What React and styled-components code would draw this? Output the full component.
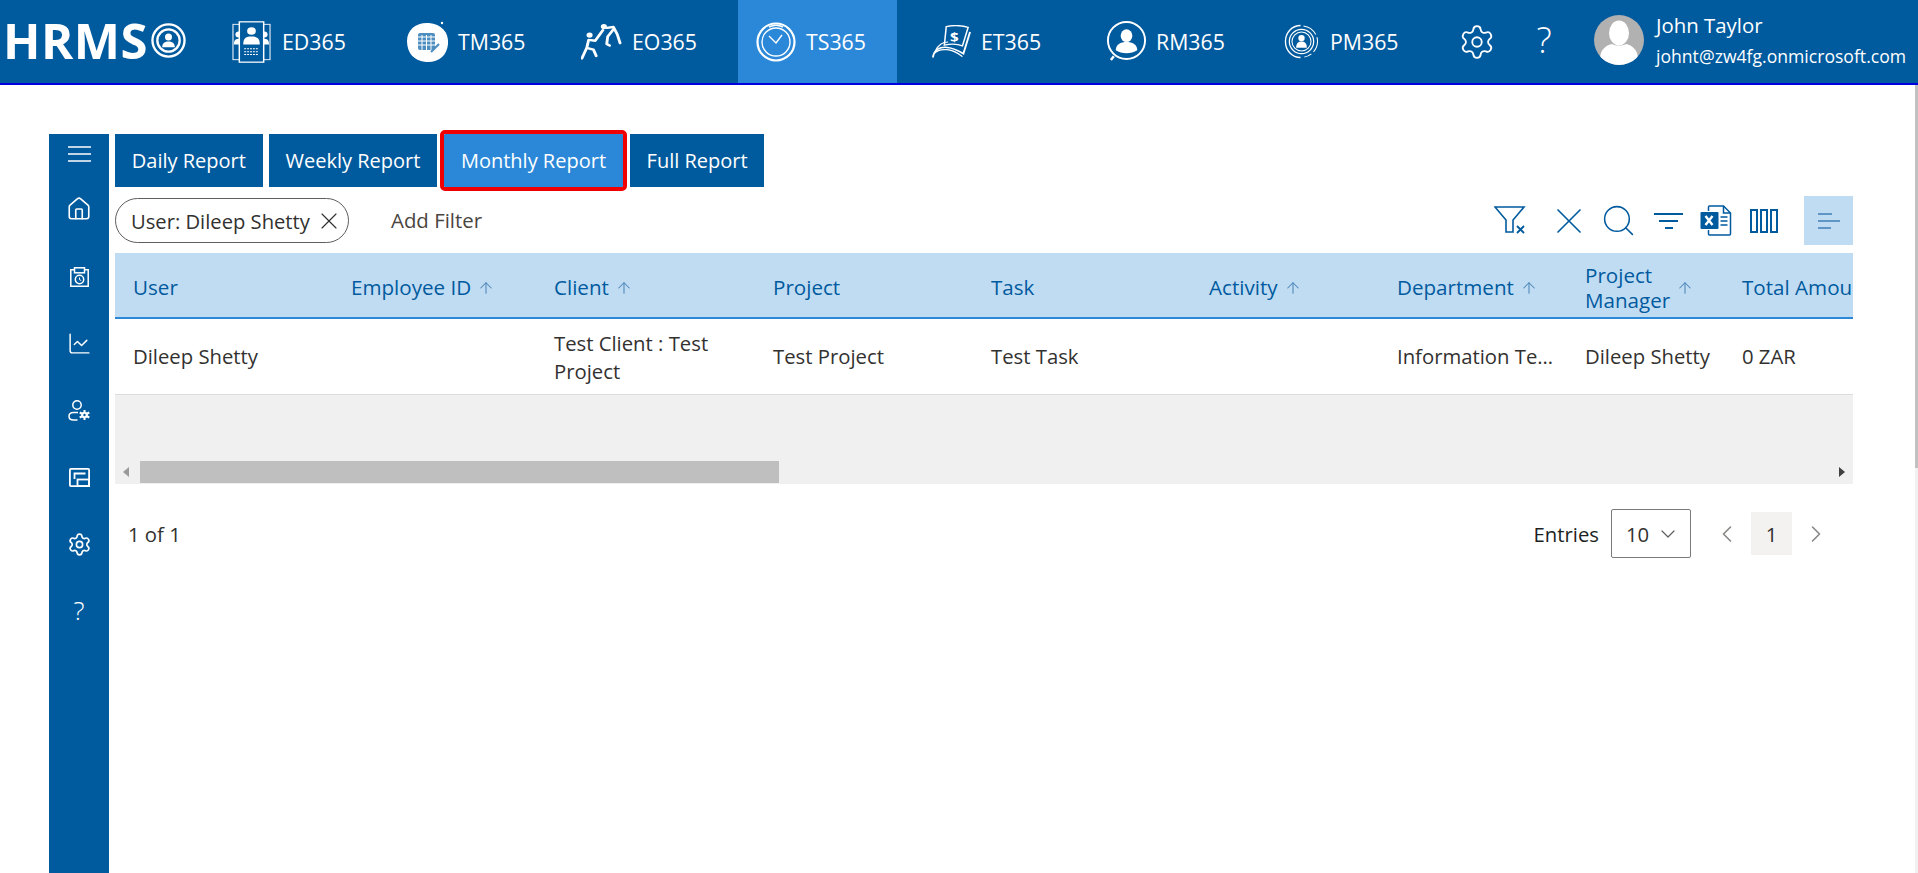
import React from "react";
import styled, { createGlobalStyle } from "styled-components";
import { ArrowUp, ChevronDown, ChevronLeft, ChevronRight, Settings, X, Search, Home, ChartLine } from "lucide-react";

const GlobalStyle = createGlobalStyle`
  html, body { margin: 0; padding: 0; height: 100%; overflow: hidden; background: #fff; }
  body { font-family: "Open Sans", "Noto Sans", "Liberation Sans", sans-serif; color: #323130; }
  * { box-sizing: border-box; }
`;

const Page = styled.div`
  height: 873px;
  display: flex;
  flex-direction: column;
  overflow: hidden;
`;

const Header = styled.header`
  height: 85px;
  flex: none;
  display: flex;
  background: #005a9e;
  border-bottom: 2px solid #0000e0;
  color: #fff;
`;

const Logo = styled.div`
  width: 214px;
  flex: none;
  display: flex;
  align-items: center;
  padding: 0 0 2px 3px;
  gap: 3px;
`;

const LogoText = styled.span`
  font-weight: 700;
  font-size: 49px;
  letter-spacing: 0.5px;
  line-height: 1;
`;

const Nav = styled.nav`
  display: flex;
  gap: 17px;
`;

const NavItem = styled.a`
  width: ${(p) => p.$w}px;
  padding-left: 18px;
  display: flex;
  align-items: center;
  gap: ${(p) => p.$gap}px;
  font-size: 21.3px;
  background: ${(p) => (p.$active ? "#2b88d8" : "transparent")};
`;

const HeaderTools = styled.div`
  display: flex;
  align-items: center;
  margin-left: 21px;
`;

const ToolBtn = styled.span`
  display: flex;
  align-items: center;
  justify-content: center;
  width: ${(p) => p.$w}px;
`;

const Help = styled.span`
  font-size: ${(p) => p.$size}px;
  font-weight: 300;
  line-height: 1;
  padding-bottom: 3px;
  color: #fff;
`;

const Avatar = styled.div`
  width: 50px;
  height: 50px;
  border-radius: 50%;
  overflow: hidden;
  flex: none;
  margin: 0 0 4px 3px;
`;

const UserBox = styled.div`
  margin: 0 0 3px 12px;
  display: flex;
  flex-direction: column;
  gap: 8px;
`;

const UserName = styled.span`
  font-size: 20.4px;
  line-height: 24px;
`;

const UserMail = styled.span`
  font-size: 17.6px;
  line-height: 22px;
  white-space: nowrap;
`;

const Body = styled.div`
  flex: 1;
  display: flex;
  gap: 6px;
  padding: 49px 0 0 49px;
  min-height: 0;
`;

const Sidebar = styled.aside`
  width: 60px;
  flex: none;
  background: #005a9e;
  display: flex;
  flex-direction: column;
  align-items: center;
  color: #fff;
`;

const SideSlot = styled.span`
  height: ${(p) => p.$h || 67}px;
  flex: none;
  display: flex;
  align-items: center;
  justify-content: center;
`;

const Main = styled.main`
  width: 1738px;
  flex: none;
`;

const Tabs = styled.div`
  display: flex;
  gap: 6px;
  height: 53px;
`;

const Tab = styled.button`
  border: none;
  padding: 0 16.8px;
  height: 53px;
  color: #fff;
  font: inherit;
  font-size: 20px;
  background: ${(p) => (p.$active ? "#2b88d8" : "#005a9e")};
  ${(p) => p.$active && "outline: 4px solid #f00000; outline-offset: 0; border-radius: 1px; margin: 0 1px 0 1px;"}
`;

const FilterRow = styled.div`
  margin-top: 9px;
  height: 49px;
  display: flex;
  align-items: center;
`;

const Chip = styled.div`
  height: 45px;
  width: 234px;
  border: 1px solid #605e5c;
  border-radius: 23px;
  display: flex;
  align-items: center;
  justify-content: space-between;
  padding: 0 5px 0 15px;
  font-size: 20.2px;
  white-space: nowrap;
`;

const AddFilter = styled.span`
  margin: 0 0 2px 42px;
  font-size: 20.4px;
  color: #4a4540;
`;

const Toolbar = styled.div`
  margin-left: auto;
  display: flex;
  align-items: center;
  color: #005a9e;
`;

const ToolIcon = styled.span`
  display: flex;
  justify-content: center;
  align-items: center;
  width: ${(p) => p.$w}px;
  svg { flex: none; }
`;

const ToolActive = styled.span`
  width: 49px;
  height: 49px;
  margin-left: 16px;
  background: #c0dcf3;
  display: flex;
  align-items: center;
  justify-content: center;
`;

const TableWrap = styled.div`
  margin-top: 8px;
  height: 231px;
  background: #f0f0f0;
  display: flex;
  flex-direction: column;
`;

const TableScroll = styled.div`
  flex: 1;
  overflow: hidden;
`;

const Table = styled.table`
  table-layout: fixed;
  width: 1809px;
  border-collapse: collapse;
`;

const Th = styled.th`
  height: 65px;
  background: #c0dcf3;
  border-bottom: 2px solid #2b88d8;
  padding: 5px 18px 0;
  text-align: left;
  font-weight: 400;
  font-size: 20.6px;
  line-height: 25px;
  color: #005a9e;
`;

const ThInner = styled.div`
  display: flex;
  align-items: center;
  gap: 6px;
  white-space: nowrap;
`;

const Td = styled.td`
  height: 76px;
  background: #fff;
  border-bottom: 1px solid #dcdcdc;
  padding: ${(p) => (p.$wrap ? "2px" : "0")} 8px 0 18px;
  font-size: 20.3px;
  line-height: 28px;
  color: #323130;
  white-space: ${(p) => (p.$wrap ? "normal" : "nowrap")};
  overflow: hidden;
  text-overflow: ellipsis;
`;

const ScrollTrack = styled.div`
  height: 23px;
  flex: none;
  display: flex;
  align-items: center;
  padding: 0 8px 1px;
`;

const Thumb = styled.div`
  margin-left: 11px;
  width: 639px;
  height: 22px;
  background: #bfbfbf;
`;

const Caret = styled.span`
  width: 0;
  height: 0;
  border-top: 5px solid transparent;
  border-bottom: 5px solid transparent;
  ${(p) => (p.$right ? "border-left: 6px solid #404040; margin-left: auto;" : "border-right: 6px solid #9a9a9a;")}
`;

const Footer = styled.div`
  padding: 25px 0 0 13px;
  display: flex;
  align-items: center;
  font-size: 20.3px;
`;

const Count = styled.span`
  color: #323130;
`;

const Pager = styled.div`
  margin-left: auto;
  padding-right: 13px;
  display: flex;
  align-items: center;
`;

const EntriesLabel = styled.span`
  margin-right: 12px;
  color: #201f1e;
`;

const Select = styled.div`
  width: 80px;
  height: 49px;
  border: 1px solid #7a7a7a;
  border-radius: 2px;
  display: flex;
  align-items: center;
  justify-content: space-between;
  padding: 0 10px 0 14px;
`;

const PageArrow = styled.span`
  width: ${(p) => p.$w}px;
  padding-left: ${(p) => p.$shift || 0}px;
  display: flex;
  justify-content: center;
  color: #8a8886;
`;

const PageNum = styled.span`
  width: 41px;
  height: 43px;
  background: #f3f2f1;
  display: flex;
  align-items: center;
  justify-content: center;
`;

const PageScroll = styled.div`
  position: fixed;
  top: 85px;
  right: 0;
  width: 3px;
  bottom: 0;
  background: #f1f1f1;
`;

const PageScrollThumb = styled.div`
  height: 383px;
  background: #c1c1c1;
`;

/* drawings */
const LogoIcon = () => (
  <svg width="35" height="35" viewBox="0 0 36 36" fill="none">
    <circle cx="18" cy="18" r="16.5" stroke="#fff" strokeWidth="2.4" />
    <circle cx="18" cy="18" r="11.5" stroke="#fff" strokeWidth="2.4" />
    <circle cx="18" cy="14.5" r="3.6" fill="#fff" />
    <path d="M11.5 25c0-4.5 3-6 6.5-6s6.500 1.500 6.500 6z" fill="#fff" />
  </svg>
);

const EdIcon = () => (
  <svg width="39" height="42" viewBox="0 0 40 50" preserveAspectRatio="none" fill="none" stroke="#dfeaf4" strokeWidth="1.2">
    <rect x="1" y="4" width="9" height="42" />
    <rect x="30" y="4" width="9" height="42" />
    <circle cx="7" cy="16" r="3.500" fill="#fff" stroke="none" />
    <circle cx="33" cy="16" r="3.500" fill="#fff" stroke="none" />
    <path d="M2 28c0-6 2-7 6-7v7zM38 28c0-6-2-7-6-7v7z" fill="#fff" stroke="none" />
    <rect x="7.500" y="1" width="25" height="48" fill="#005a9e" stroke="#fff" strokeWidth="1.500" />
    <circle cx="20" cy="12" r="4.500" fill="#fff" stroke="none" />
    <path d="M11.500 28c0-8 3-9.500 8.500-9.500s8.500 1.500 8.500 9.500z" fill="#fff" stroke="none" />
    <path d="M12.500 33h15M12.500 36.500h15M12.500 40h15" stroke="#fff" strokeDasharray="2 1" />
  </svg>
);

const TmIcon = () => (
  <svg width="44" height="42" viewBox="0 0 44 42" fill="none">
    <path d="M2 20C2 8 12 1 24 2c12 1 20 9 19 21-1 12-10 19-22 18C9 40 2 32 2 20z" fill="#fff" />
    <circle cx="37" cy="2" r="1.200" fill="#fff" />
    <rect x="13" y="12" width="17" height="17" rx="2" fill="#4d8dc0" />
    <path d="M13 16h17M13 20h17M13 24h17M17 14v15M21.500 14v15M26 14v15" stroke="#fff" strokeWidth="1" />
    <path d="M26 31l8-8" stroke="#4d8dc0" strokeWidth="2.200" />
  </svg>
);

const EoIcon = () => (
  <svg width="41" height="37" viewBox="0 0 43 46" preserveAspectRatio="none" fill="none" stroke="#fff" strokeWidth="3" strokeLinecap="round" strokeLinejoin="round">
    <circle cx="9" cy="15" r="3.200" fill="#fff" stroke="none" />
    <circle cx="24" cy="4.500" r="3.200" fill="#fff" stroke="none" />
    <path d="M8 21l-2 10-5 13M6 31l7 2 3 8M8 21l7 1 8-13" />
    <path d="M27 6l7-1 4 9 3 11M34 8l-6 9-1 9 3 2" />
  </svg>
);

const TsIcon = () => (
  <svg width="40" height="40" viewBox="0 0 40 40" fill="none" stroke="#fff">
    <circle cx="20" cy="20" r="18.500" strokeWidth="2.200" />
    <circle cx="20" cy="20" r="14" strokeWidth="1.400" />
    <path d="M13 14l7 7 6-8" strokeWidth="1.400" />
    <path d="M13 5a16 16 0 0 1 14 0" strokeWidth="1.400" />
  </svg>
);

const EtIcon = () => (
  <svg width="39" height="34" viewBox="0 0 41 44" preserveAspectRatio="none" fill="none" stroke="#fff" strokeWidth="1.600">
    <path d="M15 2c8-2 15-2 23 1l-6 24c-6-3-12-3-19-1z" />
    <text x="19" y="22" fontSize="16" fontWeight="700" fill="#fff" stroke="none" fontFamily="Open Sans, sans-serif">$</text>
    <path d="M1 42c1-10 7-14 15-13 8 1 13 5 17 8l7-28" strokeWidth="2" />
    <path d="M4 33c3-8 8-11 13-11" />
    <path d="M2 37c3-4 8-6 14-5 6 1 11 4 16 9" />
  </svg>
);

const RmIcon = () => (
  <svg width="41" height="41" viewBox="0 0 42 42" fill="none">
    <circle cx="21" cy="20" r="19" stroke="#fff" strokeWidth="2" />
    <ellipse cx="21" cy="15" rx="6" ry="6.500" fill="#fff" />
    <path d="M10 30c0-6 5-8.500 11-8.500s11 2.500 11 8.500c-3 2-7 3-11 3s-8-1-11-3z" fill="#fff" />
    <path d="M5 40l3-4" stroke="#fff" strokeWidth="2.500" />
  </svg>
);

const PmIcon = () => (
  <svg width="35" height="35" viewBox="0 0 36 36" fill="none" stroke="#fff">
    <path d="M17 1.500C8 1.500 1.500 9 1.500 18S8 34.500 17 34.500" strokeWidth="1.400" />
    <path d="M20 2c8 1 14.500 8 14.500 16S28 33 21 34" strokeWidth="1.100" strokeDasharray="16 3" />
    <circle cx="18" cy="18" r="12.500" strokeWidth="1.300" />
    <circle cx="18" cy="18" r="9.800" strokeWidth="1.100" />
    <circle cx="18" cy="14.500" r="3.300" fill="#fff" stroke="none" />
    <path d="M12.500 24.500c0-5 2.500-6.500 5.500-6.500s5.500 1.500 5.500 6.500z" fill="#fff" stroke="none" />
  </svg>
);

const AvatarIcon = () => (
  <svg width="50" height="50" viewBox="0 0 50 50">
    <rect width="50" height="50" fill="#b1b1b1" />
    <ellipse cx="25" cy="18" rx="10" ry="12.500" fill="#fff" />
    <path d="M6 44c0-10 7-14 12-15 4 2 10 2 14 0 5 1 12 5 12 15-5 5-12 7-19 7S11 49 6 44z" fill="#fff" />
  </svg>
);

const MenuIcon = () => (
  <svg width="23" height="16" viewBox="0 0 23 16" fill="none" stroke="#fff" strokeWidth="1.500">
    <path d="M0 1h23M0 8h23M0 15h23" />
  </svg>
);

const SaveClockIcon = () => (
  <svg width="19" height="20" viewBox="0 0 19 20" fill="none" stroke="#fff" strokeWidth="1.500">
    <path d="M.8 2.800h17.400v16.400H.8z" />
    <rect x="4.500" y=".8" width="10" height="5" fill="#005a9e" />
    <circle cx="9.500" cy="12.500" r="4.200" />
    <path d="M9.500 10.500v2.200l1.700.8" strokeWidth="1" />
  </svg>
);

const UserGearIcon = () => (
  <svg width="22" height="21" viewBox="0 0 22 21" fill="none" stroke="#fff" strokeWidth="1.500">
    <circle cx="9" cy="5" r="4.200" />
    <path d="M9.500 20H5.500c-6 0-6-7.500 0-7.500h4.500" />
    <circle cx="16.500" cy="15" r="3.300" fill="#fff" stroke="none" />
    <path d="M16.500 10v10M11.700 12.500l9.600 5M21.300 12.500l-9.600 5" strokeWidth="2" />
    <circle cx="16.500" cy="15" r="1.200" fill="#005a9e" stroke="none" />
  </svg>
);

const PanelIcon = () => (
  <svg width="21" height="19" viewBox="0 0 21 19" fill="none" stroke="#fff" strokeWidth="1.800">
    <rect x=".9" y=".9" width="19.200" height="17.200" rx="1" />
    <path d="M5.500 11V5.500h11" />
    <rect x="8.500" y="11.500" width="11.600" height="6.600" />
  </svg>
);

const FunnelXIcon = () => (
  <svg width="33" height="29" viewBox="0 0 33 29" fill="none" stroke="#005a9e" strokeWidth="1.600">
    <path d="M1 1h29L19 14v12l-7 0V14z" />
    <path d="M23 20l7 7M30 20l-7 7" strokeWidth="1.800" />
  </svg>
);

const SortLinesIcon = () => (
  <svg width="29" height="18" viewBox="0 0 29 18" fill="none" stroke="#005a9e" strokeWidth="2">
    <path d="M0 2h29M5 9h19M11 16h8" />
  </svg>
);

const ExcelIcon = () => (
  <svg width="32" height="31" viewBox="0 0 31 31" fill="none">
    <path d="M8 6V2a1 1 0 0 1 1-1h14l7 7v21a1 1 0 0 1-1 1H9a1 1 0 0 1-1-1v-4" stroke="#005a9e" strokeWidth="1.500" />
    <path d="M23 1v7h7" stroke="#005a9e" strokeWidth="1.500" />
    <rect x="0" y="7" width="18" height="17" rx="1" fill="#005a9e" />
    <path d="M5 11l7 9M12 11l-7 9" stroke="#fff" strokeWidth="2.400" />
    <path d="M20 12h7M20 16h7M20 20h7" stroke="#005a9e" strokeWidth="1.500" />
  </svg>
);

const ColumnsIcon = () => (
  <svg width="28" height="24" viewBox="0 0 28 24" fill="none" stroke="#005a9e" strokeWidth="2">
    <rect x="1" y="1" width="6" height="22" />
    <rect x="11" y="1" width="6" height="22" />
    <rect x="21" y="1" width="6" height="22" />
  </svg>
);

const AlignIcon = () => (
  <svg width="22" height="18" viewBox="0 0 22 18" fill="none" stroke="#3f7fb8" strokeWidth="1.600">
    <path d="M0 2h14M0 9h22M0 16h13" />
  </svg>
);

const navItems = [
  { label: "ED365", icon: <EdIcon />, w: 156, gap: 11 },
  { label: "TM365", icon: <TmIcon />, w: 159, gap: 9 },
  { label: "EO365", icon: <EoIcon />, w: 158, gap: 10 },
  { label: "TS365", icon: <TsIcon />, w: 159, gap: 10, active: true },
  { label: "ET365", icon: <EtIcon />, w: 157, gap: 10 },
  { label: "RM365", icon: <RmIcon />, w: 161, gap: 9 },
  { label: "PM365", icon: <PmIcon />, w: 170, gap: 11 },
];

const columns = [
  { label: "User", w: 218 },
  { label: "Employee ID", w: 203, sort: true },
  { label: "Client", w: 219, sort: true },
  { label: "Project", w: 218 },
  { label: "Task", w: 218 },
  { label: "Activity", w: 188, sort: true },
  { label: "Department", w: 188, sort: true },
  { label: "Project Manager", w: 157, sort: true, wrap: true },
  { label: "Total Amount", w: 200 },
];

const SortArrow = () => <ArrowUp size={18} strokeWidth={1.4} color="#4d86b8" />;

export default function App() {
  return (
    <Page>
      <GlobalStyle />
      <Header>
        <Logo>
          <LogoText>HRMS</LogoText>
          <LogoIcon />
        </Logo>
        <Nav>
          {navItems.map((n) => (
            <NavItem key={n.label} $w={n.w} $gap={n.gap} $active={n.active}>
              {n.icon}
              {n.label}
            </NavItem>
          ))}
        </Nav>
        <HeaderTools>
          <ToolBtn $w={40}><Settings size={38} strokeWidth={1.15} color="#fff" /></ToolBtn>
          <ToolBtn $w={94}><Help $size={36}>?</Help></ToolBtn>
          <Avatar><AvatarIcon /></Avatar>
          <UserBox>
            <UserName>John Taylor</UserName>
            <UserMail>johnt@zw4fg.onmicrosoft.com</UserMail>
          </UserBox>
        </HeaderTools>
      </Header>
      <Body>
        <Sidebar>
          <SideSlot $h={40}><MenuIcon /></SideSlot>
          <SideSlot $h={69}><Home size={26} strokeWidth={1.5} /></SideSlot>
          <SideSlot><SaveClockIcon /></SideSlot>
          <SideSlot><ChartLine size={25} strokeWidth={1.4} /></SideSlot>
          <SideSlot><UserGearIcon /></SideSlot>
          <SideSlot><PanelIcon /></SideSlot>
          <SideSlot><Settings size={25} strokeWidth={1.6} /></SideSlot>
          <SideSlot><Help $size={26}>?</Help></SideSlot>
        </Sidebar>
        <Main>
          <Tabs>
            <Tab>Daily Report</Tab>
            <Tab>Weekly Report</Tab>
            <Tab $active>Monthly Report</Tab>
            <Tab>Full Report</Tab>
          </Tabs>
          <FilterRow>
            <Chip>
              User: Dileep Shetty
              <X size={28} strokeWidth={1} color="#323130" />
            </Chip>
            <AddFilter>Add Filter</AddFilter>
            <Toolbar>
              <ToolIcon $w={72}><FunnelXIcon /></ToolIcon>
              <ToolIcon $w={46}><X size={44} strokeWidth={0.9} /></ToolIcon>
              <ToolIcon $w={52}><Search size={37} strokeWidth={1} /></ToolIcon>
              <ToolIcon $w={48}><SortLinesIcon /></ToolIcon>
              <ToolIcon $w={48}><ExcelIcon /></ToolIcon>
              <ToolIcon $w={48}><ColumnsIcon /></ToolIcon>
              <ToolActive><AlignIcon /></ToolActive>
            </Toolbar>
          </FilterRow>
          <TableWrap>
            <TableScroll>
              <Table>
                <colgroup>
                  {columns.map((c) => <col key={c.label} width={c.w} />)}
                </colgroup>
                <thead>
                  <tr>
                    {columns.map((c) => (
                      <Th key={c.label}>
                        <ThInner>
                          {c.wrap ? <span>Project<br />Manager</span> : c.label}
                          {c.sort && <SortArrow />}
                        </ThInner>
                      </Th>
                    ))}
                  </tr>
                </thead>
                <tbody>
                  <tr>
                    <Td>Dileep Shetty</Td>
                    <Td></Td>
                    <Td $wrap>Test Client : Test Project</Td>
                    <Td>Test Project</Td>
                    <Td>Test Task</Td>
                    <Td></Td>
                    <Td>Information Technology</Td>
                    <Td>Dileep Shetty</Td>
                    <Td>0 ZAR</Td>
                  </tr>
                </tbody>
              </Table>
            </TableScroll>
            <ScrollTrack>
              <Caret />
              <Thumb />
              <Caret $right />
            </ScrollTrack>
          </TableWrap>
          <Footer>
            <Count>1 of 1</Count>
            <Pager>
              <EntriesLabel>Entries</EntriesLabel>
              <Select>
                10
                <ChevronDown size={24} strokeWidth={1.2} color="#605e5c" />
              </Select>
              <PageArrow $w={60} $shift={12}><ChevronLeft size={28} strokeWidth={1.4} /></PageArrow>
              <PageNum>1</PageNum>
              <PageArrow $w={48}><ChevronRight size={28} strokeWidth={1.4} /></PageArrow>
            </Pager>
          </Footer>
        </Main>
      </Body>
      <PageScroll><PageScrollThumb /></PageScroll>
    </Page>
  );
}
